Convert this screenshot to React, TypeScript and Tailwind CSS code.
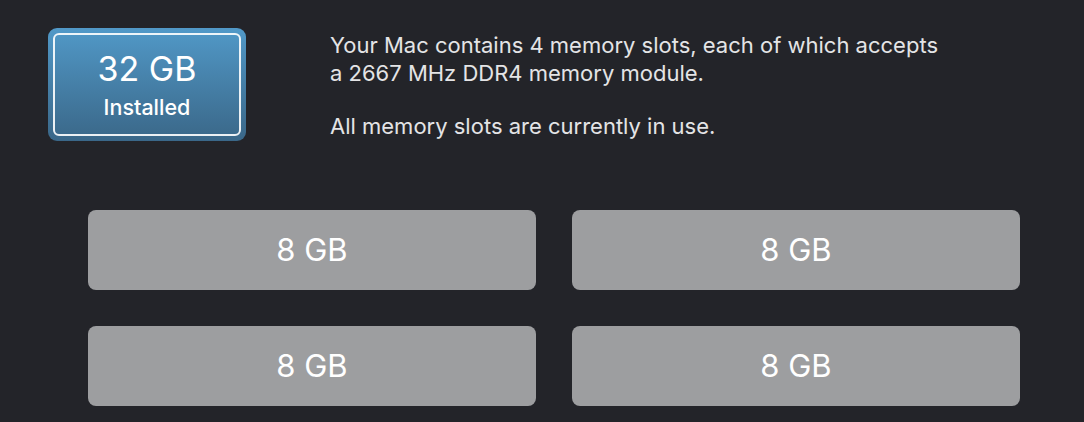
export default function App() {
  const slots = ['8 GB', '8 GB', '8 GB', '8 GB'];
  return (
    <div
      className="w-[1084px] h-[422px] bg-[#232429] overflow-hidden text-white"
      style={{ fontFamily: 'Inter, "Noto Sans", sans-serif' }}
    >
      <div className="flex pt-[28px] pl-[48px]">
        <div className="w-[198px] h-[113px] rounded-[9px] p-[5px] bg-gradient-to-b from-[#5199c8] to-[#3a6788]">
          <div className="h-full rounded-[6px] border-2 border-white/90 flex flex-col items-center justify-center">
            <div className="text-[34px] leading-[36px] mt-[1px]">32 GB</div>
            <div className="text-[21.5px] leading-[24px] mt-[8px] font-medium">Installed</div>
          </div>
        </div>
        <div className="ml-[84px] pt-[3px] text-[22px] leading-[28px] text-[#e4e4e6]">
          <p>Your Mac contains 4 memory slots, each of which accepts</p>
          <p>a 2667 MHz DDR4 memory module.</p>
          <p className="mt-[25px]">All memory slots are currently in use.</p>
        </div>
      </div>
      <div className="grid grid-cols-2 gap-x-[36px] gap-y-[36px] px-[88px] mt-[69px] pr-[64px]">
        {slots.map((s, i) => (
          <div
            key={i}
            className="h-[80px] rounded-[8px] bg-[#9d9ea0] flex items-center justify-center text-[31px] text-white"
          >
            {s}
          </div>
        ))}
      </div>
    </div>
  );
}
